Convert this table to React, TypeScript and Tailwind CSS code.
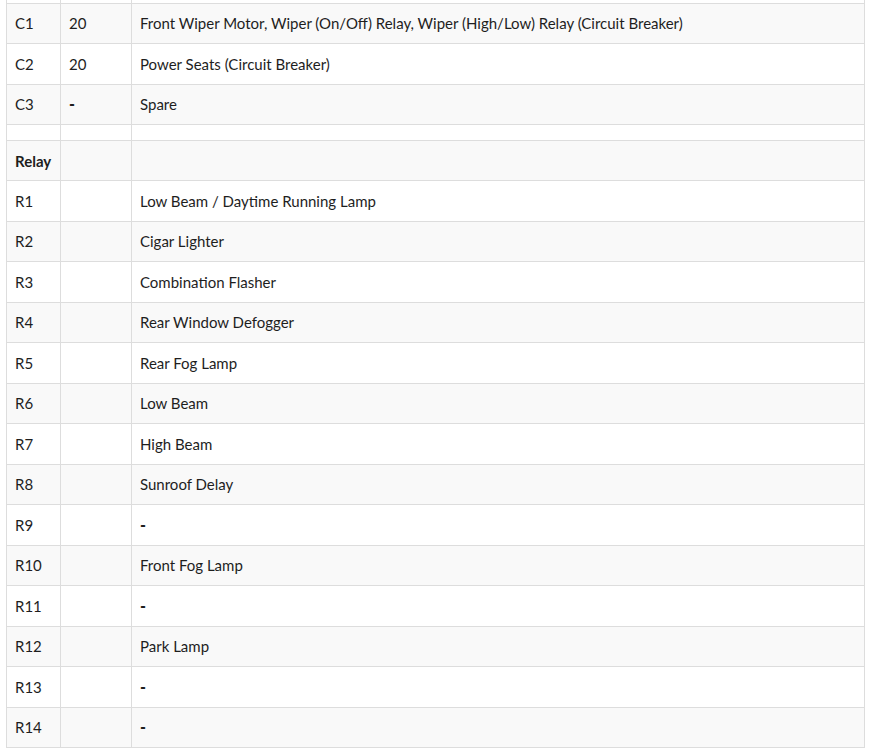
import React from 'react';

type Row = { id: string; amp?: string; desc: string };

const rows: Row[] = [
  { id: 'C1', amp: '20', desc: 'Front Wiper Motor, Wiper (On/Off) Relay, Wiper (High/Low) Relay (Circuit Breaker)' },
  { id: 'C2', amp: '20', desc: 'Power Seats (Circuit Breaker)' },
  { id: 'C3', amp: '-', desc: 'Spare' },
];

const relays: Row[] = [
  { id: 'R1', desc: 'Low Beam / Daytime Running Lamp' },
  { id: 'R2', desc: 'Cigar Lighter' },
  { id: 'R3', desc: 'Combination Flasher' },
  { id: 'R4', desc: 'Rear Window Defogger' },
  { id: 'R5', desc: 'Rear Fog Lamp' },
  { id: 'R6', desc: 'Low Beam' },
  { id: 'R7', desc: 'High Beam' },
  { id: 'R8', desc: 'Sunroof Delay' },
  { id: 'R9', desc: '-' },
  { id: 'R10', desc: 'Front Fog Lamp' },
  { id: 'R11', desc: '-' },
  { id: 'R12', desc: 'Park Lamp' },
  { id: 'R13', desc: '-' },
  { id: 'R14', desc: '-' },
];

const cell = 'border border-[#dddddd] px-2 align-middle';
const dash = (t?: string) => (t === '-' ? <b className="font-black text-[16px]">-</b> : t);

const App: React.FC = () => {
  return (
    <div className="min-h-screen bg-white pl-[6px] pr-[6px] text-[#1e1e1e] text-[15px] leading-[24px] font-['Lato','Noto_Sans',sans-serif]">
      <table className="w-[859px] border-collapse table-fixed">
        <colgroup>
          <col className="w-[54px]" />
          <col className="w-[71px]" />
          <col />
        </colgroup>
        <tbody>
          {/* tail of the row scrolled above */}
          <tr className="h-[3px] bg-white">
            <td className="border-x border-b border-[#dddddd]" />
            <td className="border-x border-b border-[#dddddd]" />
            <td className="border-x border-b border-[#dddddd]" />
          </tr>
          {rows.map((r, i) => (
            <tr key={r.id} className={`h-[40.5px] ${i % 2 === 0 ? 'bg-[#f9f9f9]' : 'bg-white'}`}>
              <td className={cell}>{r.id}</td>
              <td className={cell}>{dash(r.amp)}</td>
              <td className={cell}>{r.desc}</td>
            </tr>
          ))}
          <tr className="h-[16px] bg-white">
            <td className="border border-[#dddddd]" />
            <td className="border border-[#dddddd]" />
            <td className="border border-[#dddddd]" />
          </tr>
          <tr className="h-[40px] bg-[#f9f9f9]">
            <td className={`${cell} font-bold`}>Relay</td>
            <td className={cell} />
            <td className={cell} />
          </tr>
          {relays.map((r, i) => (
            <tr key={r.id} className={`h-[40.5px] ${i % 2 === 0 ? 'bg-white' : 'bg-[#f9f9f9]'}`}>
              <td className={cell}>{r.id}</td>
              <td className={cell} />
              <td className={cell}>{dash(r.desc)}</td>
            </tr>
          ))}
        </tbody>
      </table>
    </div>
  );
};

export default App;
